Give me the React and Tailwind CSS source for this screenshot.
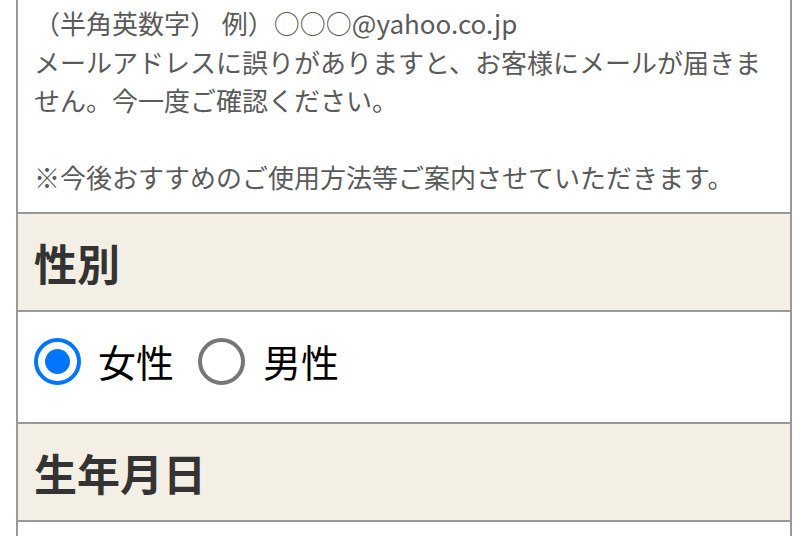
import { useState } from 'react';

const font = { fontFamily: '"Noto Sans CJK JP", "Noto Sans", sans-serif' };

function Radio({ checked }) {
  if (checked) {
    return (
      <span className="flex items-center justify-center w-[47px] h-[47px] rounded-full border-[4.5px] border-[#0075ff] bg-white">
        <span className="block w-[25px] h-[25px] rounded-full bg-[#0075ff]" />
      </span>
    );
  }
  return <span className="block w-[47px] h-[47px] rounded-full border-[4px] border-[#767676] bg-white" />;
}

export default function App() {
  const [gender, setGender] = useState('female');

  return (
    <div className="w-[808px] h-[536px] overflow-hidden bg-white" style={font}>
      <div className="ml-[16px] w-[776px] border-x-2 border-[#999]">
        {/* mail notes */}
        <div className="px-4 pt-[4px] pb-[15.5px] text-[26px] leading-[38.5px] text-[#5a5a5a]">
          <p>（半角英数字） 例）○○○@yahoo.co.jp</p>
          <p>メールアドレスに誤りがありますと、お客様にメールが届きません。今一度ご確認ください。</p>
          <p>&nbsp;</p>
          <p>※今後おすすめのご使用方法等ご案内させていただきます。</p>
        </div>

        <div className="flex items-center h-[98px] px-4 border-t-2 border-[#999] bg-[#f4efe4]">
          <h2 className="text-[43px] font-bold text-[#333] leading-none">性別</h2>
        </div>

        <div className="flex items-center h-[112px] pl-4 pb-[12px] border-t-2 border-[#999] bg-white">
          <label className="flex items-center gap-[17px] cursor-pointer" onClick={() => setGender('female')}>
            <Radio checked={gender === 'female'} />
            <span className="text-[38px] text-black leading-none">女性</span>
          </label>
          <label className="flex items-center gap-[18px] ml-[24px] cursor-pointer" onClick={() => setGender('male')}>
            <Radio checked={gender === 'male'} />
            <span className="text-[38px] text-black leading-none">男性</span>
          </label>
        </div>

        <div className="flex items-center h-[98px] px-4 border-t-2 border-[#999] bg-[#f4efe4]">
          <h2 className="text-[43px] font-bold text-[#333] leading-none">生年月日</h2>
        </div>

        <div className="h-[60px] border-t-2 border-[#999] bg-white" />
      </div>
    </div>
  );
}
